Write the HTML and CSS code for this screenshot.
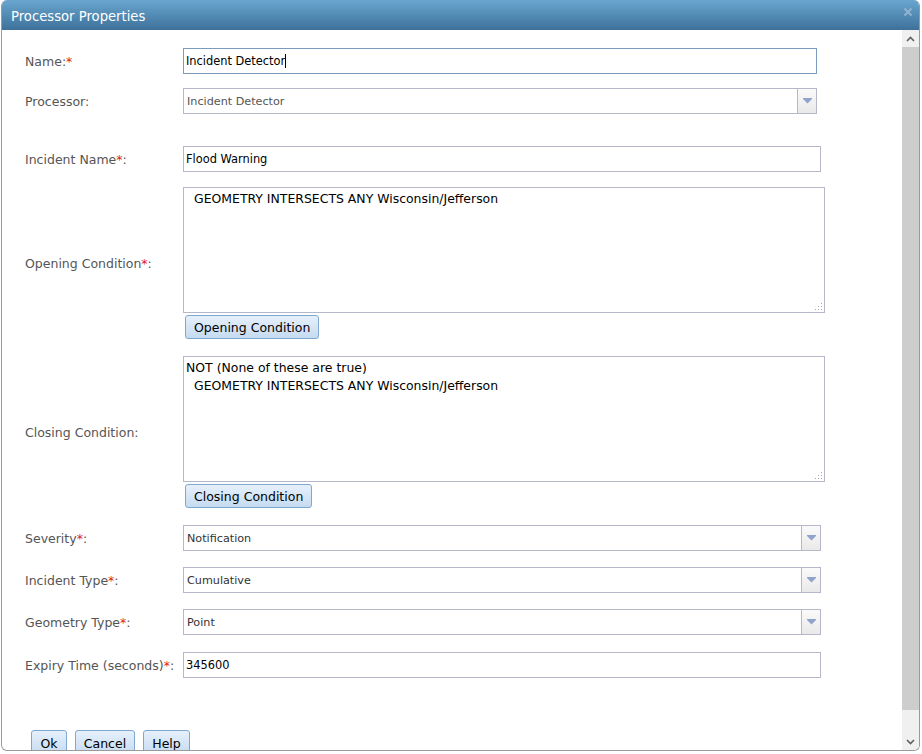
FILE: index.html
```html
<!DOCTYPE html>
<html>
<head>
<meta charset="utf-8">
<link rel="stylesheet" href="styles.css">
</head>
<body>
<div class="dialog">
  <div class="titlebar">
    <span class="title">Processor Properties</span>
    <svg class="close" width="10" height="10" viewBox="0 0 10 10"><path d="M1.5 1.5 L8.5 8.5 M8.5 1.5 L1.5 8.5" stroke="#93b4cf" stroke-width="2" fill="none"/></svg>
  </div>
  <div class="body">
    <div class="main">
      <div class="row r-name">
        <label class="lbl">Name:<span class="req">*</span></label>
        <div class="ctl"><div class="input focus w633">Incident Detector<span class="caret"></span></div></div>
      </div>
      <div class="row r-proc">
        <label class="lbl">Processor:</label>
        <div class="ctl"><div class="select w633 dim"><span class="val">Incident Detector</span><span class="arrow"><svg width="9" height="6" viewBox="0 0 9 6"><path d="M0 0 H9 V1 L4.5 5.5 L0 1 Z" fill="#8fa3cb"/></svg></span></div></div>
      </div>
      <div class="row r-iname">
        <label class="lbl">Incident Name<span class="req">*</span>:</label>
        <div class="ctl"><div class="input w637">Flood Warning</div></div>
      </div>
      <div class="row r-open">
        <label class="lbl">Opening Condition<span class="req">*</span>:</label>
        <div class="ctl">
          <div class="textarea"><div class="line ind">GEOMETRY INTERSECTS ANY Wisconsin/Jefferson</div><span class="grip"></span></div>
          <button class="btn cond">Opening Condition</button>
        </div>
      </div>
      <div class="row r-close">
        <label class="lbl">Closing Condition:</label>
        <div class="ctl">
          <div class="textarea"><div class="line">NOT (None of these are true)</div><div class="line ind">GEOMETRY INTERSECTS ANY Wisconsin/Jefferson</div><span class="grip"></span></div>
          <button class="btn cond">Closing Condition</button>
        </div>
      </div>
      <div class="row r-sev">
        <label class="lbl">Severity<span class="req">*</span>:</label>
        <div class="ctl"><div class="select w637"><span class="val">Notification</span><span class="arrow"><svg width="9" height="6" viewBox="0 0 9 6"><path d="M0 0 H9 V1 L4.5 5.5 L0 1 Z" fill="#8fa3cb"/></svg></span></div></div>
      </div>
      <div class="row r-type">
        <label class="lbl">Incident Type<span class="req">*</span>:</label>
        <div class="ctl"><div class="select w637"><span class="val">Cumulative</span><span class="arrow"><svg width="9" height="6" viewBox="0 0 9 6"><path d="M0 0 H9 V1 L4.5 5.5 L0 1 Z" fill="#8fa3cb"/></svg></span></div></div>
      </div>
      <div class="row r-geo">
        <label class="lbl">Geometry Type<span class="req">*</span>:</label>
        <div class="ctl"><div class="select w637"><span class="val">Point</span><span class="arrow"><svg width="9" height="6" viewBox="0 0 9 6"><path d="M0 0 H9 V1 L4.5 5.5 L0 1 Z" fill="#8fa3cb"/></svg></span></div></div>
      </div>
      <div class="row r-exp">
        <label class="lbl">Expiry Time (seconds)<span class="req">*</span>:</label>
        <div class="ctl"><div class="input w637">345600</div></div>
      </div>
      <div class="actions">
        <button class="btn act b-ok">Ok</button>
        <button class="btn act b-cancel">Cancel</button>
        <button class="btn act b-help">Help</button>
      </div>
    </div>
    <div class="scrollbar">
      <div class="sb-btn"><svg width="9" height="6" viewBox="0 0 9 6"><path d="M1 5 L4.5 1.5 L8 5" stroke="#606060" stroke-width="1.6" fill="none"/></svg></div>
      <div class="sb-thumb"></div>
      <div class="sb-track"></div>
      <div class="sb-btn"><svg width="9" height="6" viewBox="0 0 9 6"><path d="M1 1 L4.5 4.5 L8 1" stroke="#606060" stroke-width="1.6" fill="none"/></svg></div>
    </div>
  </div>
</div>
</body>
</html>
```

FILE: styles.css
```css
html, body {
  margin: 0;
  padding: 0;
  background: #ffffff;
}
body {
  font-family: "DejaVu Sans", Verdana, sans-serif;
  width: 922px;
  height: 754px;
  overflow: hidden;
}
.dialog {
  margin-left: 1px;
  width: 917px;
  height: 750px;
  border: 1px solid #9a9a9a;
  border-top: none;
  border-radius: 6px 6px 6px 6px;
  overflow: hidden;
  display: flex;
  flex-direction: column;
  background: #fff;
}
.titlebar {
  height: 30px;
  flex: none;
  background: linear-gradient(#69a6cf, #3d719a);
  display: flex;
  align-items: center;
  justify-content: space-between;
  padding: 0 6px 0 9px;
  box-sizing: border-box;
}
.title {
  color: #ffffff;
  font-size: 13.2px;
  font-family: "DejaVu Sans", Verdana, sans-serif;
  padding-top: 2px;
}
.close {
  margin-top: -6px;
}
.body {
  flex: 1;
  display: flex;
  min-height: 0;
}
.main {
  flex: 1;
  overflow: hidden;
  padding-left: 23px;
}
.row {
  display: flex;
  align-items: center;
}
.lbl {
  width: 158px;
  flex: none;
  font-size: 12.5px;
  color: #555555;
}
.req {
  color: #e21b1b;
}
.ctl {
  display: flex;
  flex-direction: column;
  align-items: flex-start;
}
.input, .select {
  height: 26px;
  box-sizing: border-box;
  border: 1px solid #b5b8c8;
  background: #fff;
  font-size: 11.4px;
  color: #000;
  display: flex;
  align-items: center;
  padding-left: 2px;
}
.input.focus {
  border-color: #7a9cbf;
}
.caret {
  display: inline-block;
  width: 1px;
  height: 14px;
  background: #000;
}
.w633 { width: 634px; }
.w637 { width: 638px; }
.select {
  justify-content: space-between;
  padding-left: 3px;
  color: #333;
  font-size: 11.2px;
}
.select.dim { color: #555; }
.arrow {
  width: 18px;
  height: 100%;
  border-left: 1px solid #b5b8c8;
  background: linear-gradient(#fafafa, #e9e9e9);
  display: flex;
  align-items: center;
  justify-content: center;
}
.textarea {
  position: relative;
  width: 642px;
  height: 126px;
  box-sizing: border-box;
  border: 1px solid #b5b8c8;
  padding: 2px 2px;
  font-size: 12.45px;
  color: #000;
}
.line {
  height: 18px;
  line-height: 18px;
}
.line.ind { padding-left: 8px; }
.grip {
  position: absolute;
  right: 2px;
  bottom: 2px;
  width: 7px;
  height: 7px;
  background:
    linear-gradient(#a9a9a9, #a9a9a9) 6px 0 / 1px 1px no-repeat,
    linear-gradient(#a9a9a9, #a9a9a9) 3px 3px / 1px 1px no-repeat,
    linear-gradient(#a9a9a9, #a9a9a9) 6px 3px / 1px 1px no-repeat,
    linear-gradient(#a9a9a9, #a9a9a9) 0 6px / 1px 1px no-repeat,
    linear-gradient(#a9a9a9, #a9a9a9) 3px 6px / 1px 1px no-repeat,
    linear-gradient(#a9a9a9, #a9a9a9) 6px 6px / 1px 1px no-repeat;
}
.btn {
  font-family: "DejaVu Sans", Verdana, sans-serif;
  font-size: 12.5px;
  color: #000;
  background: linear-gradient(#e6f0fb, #c5dbf1);
  border: 1px solid #7ea8d0;
  border-radius: 3px;
  height: 24px;
  padding: 0 8px;
}
.btn.cond {
  margin-top: 2px;
  margin-left: 2px;
}
.r-name { margin-top: 18px; }
.r-proc { margin-top: 14px; }
.r-iname { margin-top: 32px; }
.r-open { margin-top: 15px; }
.r-close { margin-top: 17px; }
.r-sev { margin-top: 17px; }
.r-type { margin-top: 16px; }
.r-geo { margin-top: 16px; }
.r-exp { margin-top: 17px; }
.actions {
  margin-top: 52px;
  margin-left: 6px;
  display: flex;
  gap: 7px;
}
.btn.act {
  height: 26px;
  padding: 0;
  font-size: 12.5px;
}
.b-ok { width: 36px; }
.b-cancel { width: 60px; margin-left: 1px; }
.b-help { width: 47px; margin-left: 1px; }
.scrollbar {
  width: 17px;
  flex: none;
  background: #f0f0f0;
  display: flex;
  flex-direction: column;
}
.sb-btn {
  height: 17px;
  flex: none;
  display: flex;
  align-items: center;
  justify-content: center;
}
.sb-thumb {
  height: 663px;
  flex: none;
  background: #cdcdcd;
}
.sb-track {
  flex: 1;
}
```
